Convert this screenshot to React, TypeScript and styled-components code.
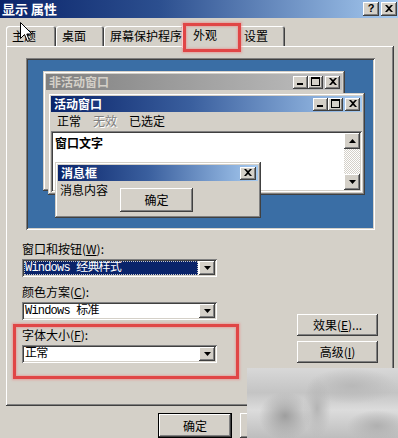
import React from "react";
import styled, { createGlobalStyle, css } from "styled-components";

const GlobalStyle = createGlobalStyle`
  html, body {
    margin: 0;
    padding: 0;
    background: #d4d0c8;
  }
  body {
    font-family: "Noto Sans CJK SC", "Liberation Sans", sans-serif;
    font-size: 12px;
    color: #000;
  }
  * {
    box-sizing: border-box;
  }
`;

const raised = css`
  background: #d4d0c8;
  box-shadow: inset -1px -1px #404040, inset 1px 1px #fff,
    inset -2px -2px #808080, inset 2px 2px #d4d0c8;
`;

const frame = css`
  background: #d4d0c8;
  box-shadow: inset -1px -1px #404040, inset 1px 1px #d4d0c8,
    inset -2px -2px #808080, inset 2px 2px #fff;
`;

const sunken = css`
  box-shadow: inset 1px 1px #808080, inset -1px -1px #fff,
    inset 2px 2px #404040, inset -2px -2px #d4d0c8;
`;

const Page = styled.div`
  position: relative;
  width: 398px;
  height: 438px;
  overflow: hidden;
  background: #d4d0c8;
  display: flex;
  flex-direction: column;
`;

const TitleBar = styled.div`
  height: 18px;
  flex: none;
  display: flex;
  align-items: center;
  padding: 0 1px 0 2px;
  background: linear-gradient(90deg, #0a246a 0%, #2c4f8f 40%, #a6caf0 100%);
`;

const TitleText = styled.span`
  flex: 1;
  color: #fff;
  font-weight: bold;
  font-size: 13px;
  line-height: 18px;
`;

const CaptionButtons = styled.div`
  display: flex;
  align-items: center;
  gap: 2px;
`;

const ButtonPair = styled.div`
  display: flex;
`;

const CapButton = styled.div<{ $w?: number; $h?: number }>`
  ${raised};
  width: ${(p) => p.$w ?? 16}px;
  height: ${(p) => p.$h ?? 14}px;
  display: flex;
  align-items: center;
  justify-content: center;
  padding-bottom: 1px;
`;

const HelpMark = styled.span`
  font-family: "Liberation Sans", sans-serif;
  font-weight: bold;
  font-size: 11px;
  line-height: 11px;
`;

const Body = styled.div`
  flex: 1;
  padding: 6px 4px 0 6px;
  display: flex;
  flex-direction: column;
`;

const TabRow = styled.div`
  height: 22px;
  display: flex;
  align-items: flex-start;
`;

const Tab = styled.div<{ $w: number; $active?: boolean }>`
  position: relative;
  z-index: ${(p) => (p.$active ? 2 : 1)};
  width: ${(p) => p.$w}px;
  height: ${(p) => (p.$active ? 24 : 20)}px;
  margin: ${(p) => (p.$active ? "0 -2px" : "2px 0 0")};
  padding-left: ${(p) => (p.$active ? 11 : 6)}px;
  line-height: ${(p) => (p.$active ? 22 : 20)}px;
  background: #d4d0c8;
  border-radius: 3px 3px 0 0;
  box-shadow: inset 1px 1px #fff, inset -1px 0 #404040, inset -2px 0 #808080;
  white-space: nowrap;
`;

const Panel = styled.div`
  width: 388px;
  height: 360px;
  background: #d4d0c8;
  box-shadow: inset -1px -1px #404040, inset 1px 1px #fff,
    inset -2px -2px #808080;
  padding: 12px 16px 0;
  display: flex;
  flex-direction: column;
`;

const Preview = styled.div`
  position: relative;
  width: 349px;
  height: 172px;
  margin-left: 4px;
  background: #3a6ea5;
  ${sunken};
  overflow: hidden;
`;

const Win = styled.div<{ $x: number; $y: number; $w: number; $h: number }>`
  position: absolute;
  left: ${(p) => p.$x}px;
  top: ${(p) => p.$y}px;
  width: ${(p) => p.$w}px;
  height: ${(p) => p.$h}px;
  ${frame};
  padding: 3px;
  display: flex;
  flex-direction: column;
`;

const Caption = styled.div<{ $active?: boolean }>`
  flex: none;
  height: 16px;
  display: flex;
  align-items: center;
  padding: 0 2px 0 3px;
  background: ${(p) =>
    p.$active
      ? "linear-gradient(90deg, #0a246a 0%, #3a5f9e 45%, #a6caf0 100%)"
      : "linear-gradient(90deg, #808080 0%, #c0c0c0 100%)"};
  color: ${(p) => (p.$active ? "#fff" : "#d4d0c8")};
`;

const CaptionText = styled.span`
  flex: 1;
  font-weight: bold;
  font-size: 12px;
  line-height: 14px;
  white-space: nowrap;
`;

const MenuBar = styled.div`
  flex: none;
  height: 18px;
  display: flex;
  align-items: center;
  gap: 12px;
  padding-left: 6px;
`;

const MenuItem = styled.span<{ $disabled?: boolean }>`
  line-height: 14px;
  color: ${(p) => (p.$disabled ? "#808080" : "#000")};
  text-shadow: ${(p) => (p.$disabled ? "1px 1px #fff" : "none")};
`;

const TextArea = styled.div`
  flex: 1;
  margin-top: 1px;
  background: #fff;
  ${sunken};
  padding: 2px;
  display: flex;
`;

const TextContent = styled.div`
  flex: 1;
  padding: 3px 2px;
  font-weight: bold;
  line-height: 14px;
`;

const ScrollBar = styled.div`
  width: 16px;
  display: flex;
  flex-direction: column;
  background: repeating-conic-gradient(#d4d0c8 0 25%, #fff 0 50%) 0 0 / 2px 2px;
`;

const ScrollButton = styled.div`
  ${raised};
  width: 16px;
  height: 16px;
  flex: none;
  display: flex;
  align-items: center;
  justify-content: center;
`;

const ScrollTrack = styled.div`
  flex: 1;
`;

const MsgBody = styled.div`
  display: flex;
  align-items: flex-start;
  padding-left: 2px;
`;

const MsgText = styled.span`
  line-height: 14px;
  margin-top: 2px;
`;

const PushButton = styled.div<{ $w: number; $h: number; $default?: boolean }>`
  ${raised};
  width: ${(p) => p.$w}px;
  height: ${(p) => p.$h}px;
  display: flex;
  align-items: center;
  justify-content: center;
  line-height: 14px;
  flex: none;
  ${(p) =>
    p.$default &&
    css`
      box-shadow: inset 0 0 0 1px #000, inset -2px -2px #404040,
        inset 2px 2px #fff, inset -3px -3px #808080;
    `}
`;

const MsgButton = styled(PushButton)`
  margin: 7px 0 0 12px;
`;

const Options = styled.div`
  display: flex;
  justify-content: space-between;
  align-items: flex-end;
  margin-top: 12px;
`;

const FieldColumn = styled.div`
  width: 195px;
  display: flex;
  flex-direction: column;
  gap: 8px;
`;

const Field = styled.div`
  display: flex;
  flex-direction: column;
  gap: 3px;
`;

const FieldLabel = styled.div`
  line-height: 14px;
  white-space: nowrap;
`;

const Select = styled.div`
  height: 18px;
  background: #fff;
  ${sunken};
  padding: 2px;
  display: flex;
  align-items: stretch;
`;

const SelectValue = styled.div<{ $selected?: boolean }>`
  flex: 1;
  margin-right: 1px;
  padding-left: 1px;
  font-family: "Liberation Mono", "Noto Sans CJK SC", monospace;
  letter-spacing: -0.8px;
  line-height: 14px;
  white-space: nowrap;
  overflow: hidden;
  background: ${(p) => (p.$selected ? "#0a246a" : "transparent")};
  color: ${(p) => (p.$selected ? "#fff" : "#000")};
  outline: ${(p) => (p.$selected ? "1px dotted #c8c8c8" : "none")};
  outline-offset: -1px;
`;

const DropButton = styled.div`
  ${raised};
  width: 16px;
  flex: none;
  display: flex;
  align-items: center;
  justify-content: center;
`;

const SideButtons = styled.div`
  display: flex;
  flex-direction: column;
  gap: 5px;
`;

const Footer = styled.div`
  display: flex;
  justify-content: flex-end;
  gap: 8px;
  padding: 7px 0 0;
  margin-right: -2px;
`;

const Annotation = styled.div<{ $x: number; $y: number; $w: number; $h: number }>`
  position: absolute;
  left: ${(p) => p.$x}px;
  top: ${(p) => p.$y}px;
  width: ${(p) => p.$w}px;
  height: ${(p) => p.$h}px;
  border: 3px solid #e04646;
  box-shadow: 0 0 2px 1px rgba(240, 130, 130, 0.6),
    inset 0 0 2px 1px rgba(240, 130, 130, 0.5);
  pointer-events: none;
  z-index: 5;
`;

const Cursor = styled.svg`
  position: absolute;
  left: 20px;
  top: 22px;
  z-index: 6;
`;

const Watermark = styled.div`
  position: absolute;
  left: 247px;
  top: 368px;
  width: 151px;
  height: 70px;
  z-index: 4;
  background: radial-gradient(ellipse 26px 24px at 38px 48px, #9e9e9e, transparent),
    radial-gradient(ellipse 14px 30px at 70px 40px, #b4b4b4, transparent),
    radial-gradient(ellipse 45px 18px at 105px 18px, #b8b8b8, transparent),
    radial-gradient(ellipse 30px 16px at 130px 58px, #b0b0b0, transparent),
    linear-gradient(180deg, #d8d8d8 0%, #c4c4c4 35%, #dcdcdc 60%, #bdbdbd 100%);
`;

const Underline = styled.span`
  text-decoration: underline;
`;

const MinGlyph = () => (
  <svg width="8" height="7" viewBox="0 0 8 7">
    <rect x="0" y="5" width="6" height="2" fill="#000" />
  </svg>
);

const MaxGlyph = () => (
  <svg width="9" height="9" viewBox="0 0 9 9">
    <rect x="0.5" y="0.5" width="8" height="8" fill="none" stroke="#000" />
    <rect x="0" y="1" width="9" height="1" fill="#000" />
  </svg>
);

const CloseGlyph = () => (
  <svg width="8" height="7" viewBox="0 0 8 7">
    <path d="M0 0h2l2 2 2-2h2L5 3.5 8 7H6L4 5 2 7H0l3-3.5z" fill="#000" />
  </svg>
);

const Arrow = ({ up }: { up?: boolean }) => (
  <svg width="7" height="4" viewBox="0 0 7 4">
    <polygon points={up ? "3.5,0 7,4 0,4" : "0,0 7,0 3.5,4"} fill="#000" />
  </svg>
);

const WinButtons = () => (
  <CaptionButtons>
    <ButtonPair>
      <CapButton $w={15} $h={13}>
        <MinGlyph />
      </CapButton>
      <CapButton $w={15} $h={13}>
        <MaxGlyph />
      </CapButton>
    </ButtonPair>
    <CapButton $w={15} $h={13}>
      <CloseGlyph />
    </CapButton>
  </CaptionButtons>
);

const tabs = [
  { label: "主题", w: 50 },
  { label: "桌面", w: 48 },
  { label: "屏幕保护程序", w: 80 },
  { label: "外观", w: 58, active: true },
  { label: "设置", w: 47 },
];

export default function App() {
  return (
    <>
      <GlobalStyle />
      <Page>
        <TitleBar>
          <TitleText>显示 属性</TitleText>
          <CaptionButtons>
            <CapButton>
              <HelpMark>?</HelpMark>
            </CapButton>
            <CapButton>
              <CloseGlyph />
            </CapButton>
          </CaptionButtons>
        </TitleBar>
        <Body>
          <TabRow>
            {tabs.map((t) => (
              <Tab key={t.label} $w={t.w} $active={t.active}>
                {t.label}
              </Tab>
            ))}
          </TabRow>
          <Panel>
            <Preview>
              <Win $x={17} $y={13} $w={302} $h={120}>
                <Caption>
                  <CaptionText>非活动窗口</CaptionText>
                  <WinButtons />
                </Caption>
              </Win>
              <Win $x={22} $y={35} $w={317} $h={102}>
                <Caption $active>
                  <CaptionText>活动窗口</CaptionText>
                  <WinButtons />
                </Caption>
                <MenuBar>
                  <MenuItem>正常</MenuItem>
                  <MenuItem $disabled>无效</MenuItem>
                  <MenuItem>已选定</MenuItem>
                </MenuBar>
                <TextArea>
                  <TextContent>窗口文字</TextContent>
                  <ScrollBar>
                    <ScrollButton>
                      <Arrow up />
                    </ScrollButton>
                    <ScrollTrack />
                    <ScrollButton>
                      <Arrow />
                    </ScrollButton>
                  </ScrollBar>
                </TextArea>
              </Win>
              <Win $x={29} $y={104} $w={206} $h={56}>
                <Caption $active>
                  <CaptionText>消息框</CaptionText>
                  <CapButton $w={16} $h={13}>
                    <CloseGlyph />
                  </CapButton>
                </Caption>
                <MsgBody>
                  <MsgText>消息内容</MsgText>
                  <MsgButton $w={73} $h={24}>
                    确定
                  </MsgButton>
                </MsgBody>
              </Win>
            </Preview>
            <Options>
              <FieldColumn>
                <Field>
                  <FieldLabel>
                    窗口和按钮(<Underline>W</Underline>):
                  </FieldLabel>
                  <Select>
                    <SelectValue $selected>Windows 经典样式</SelectValue>
                    <DropButton>
                      <Arrow />
                    </DropButton>
                  </Select>
                </Field>
                <Field>
                  <FieldLabel>
                    颜色方案(<Underline>C</Underline>):
                  </FieldLabel>
                  <Select>
                    <SelectValue>Windows 标准</SelectValue>
                    <DropButton>
                      <Arrow />
                    </DropButton>
                  </Select>
                </Field>
                <Field>
                  <FieldLabel>
                    字体大小(<Underline>F</Underline>):
                  </FieldLabel>
                  <Select>
                    <SelectValue>正常</SelectValue>
                    <DropButton>
                      <Arrow />
                    </DropButton>
                  </Select>
                </Field>
              </FieldColumn>
              <SideButtons>
                <PushButton $w={81} $h={22}>
                  效果(<Underline>E</Underline>)...
                </PushButton>
                <PushButton $w={81} $h={22}>
                  高级(<Underline>I</Underline>)
                </PushButton>
              </SideButtons>
            </Options>
          </Panel>
          <Footer>
            <PushButton $w={74} $h={25} $default>
              确定
            </PushButton>
            <PushButton $w={74} $h={25}>
              取消
            </PushButton>
            <PushButton $w={74} $h={25}>
              应用(<Underline>A</Underline>)
            </PushButton>
          </Footer>
        </Body>
        <Annotation $x={183} $y={23} $w={58} $h={29} />
        <Annotation $x={13} $y={324} $w={226} $h={55} />
        <Watermark />
        <Cursor width="13" height="21" viewBox="0 0 13 21">
          <path
            d="M0.5 0.5 L0.5 16.5 L4.5 12.5 L7.5 19.5 L9.5 18.5 L6.8 12 L12 12 Z"
            fill="#fff"
            stroke="#000"
            strokeWidth="1"
          />
        </Cursor>
      </Page>
    </>
  );
}
